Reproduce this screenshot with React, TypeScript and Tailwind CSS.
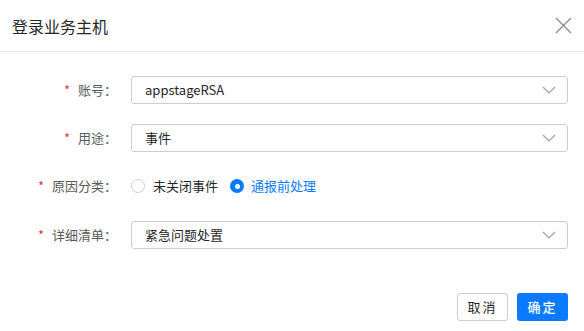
import React from 'react';

function Chevron() {
  return (
    <svg width="14" height="8" viewBox="0 0 14 8" fill="none" className="shrink-0">
      <path d="M1 1l6 6 6-6" stroke="#9aa0ac" strokeWidth="1.2" />
    </svg>
  );
}

function Label({ text }: { text: string }) {
  return (
    <div className="w-[131px] shrink-0 flex items-center justify-end pr-[14px] text-[13px] text-[#595959]">
      <span className="text-[#f5222d] mr-[8px] text-[12px]">*</span>
      <span>{text}：</span>
    </div>
  );
}

function Select({ value }: { value: string }) {
  return (
    <div className="flex-1 h-[28px] flex items-center justify-between pl-[13px] pr-[11px] border border-[#c9cdd8] rounded-[3px] text-[13px] text-[#262626]">
      <span>{value}</span>
      <Chevron />
    </div>
  );
}

export default function App() {
  const font = { fontFamily: '"Noto Sans CJK SC", "Liberation Sans", sans-serif' };
  return (
    <div className="w-[584px] h-[331px] bg-white flex flex-col" style={font}>
      <div className="h-[52px] flex items-center justify-between pl-[12px] pr-[12px] border-b border-[#e5e6eb]">
        <span className="text-[16px] text-[#262626]">登录业务主机</span>
        <svg width="17" height="17" viewBox="0 0 17 17" fill="none">
          <path d="M1 1l15 15M16 1L1 16" stroke="#8c8c8c" strokeWidth="1.4" />
        </svg>
      </div>
      <div className="flex flex-col pr-[16px] pt-[24px]">
        <div className="flex items-center">
          <Label text="账号" />
          <Select value="appstageRSA" />
        </div>
        <div className="flex items-center mt-[20px]">
          <Label text="用途" />
          <Select value="事件" />
        </div>
        <div className="flex items-center mt-[20px] h-[28px]">
          <Label text="原因分类" />
          <div className="flex items-center text-[13px]">
            <span className="w-[14px] h-[14px] rounded-full border border-[#c9cdd8]" />
            <span className="ml-[8px] text-[#262626]">未关闭事件</span>
            <span className="w-[14px] h-[14px] rounded-full bg-[#0a7bff] ml-[12px] flex items-center justify-center">
              <span className="w-[5px] h-[5px] rounded-full bg-white" />
            </span>
            <span className="ml-[7px] text-[#0a7bff]">通报前处理</span>
          </div>
        </div>
        <div className="flex items-center mt-[21px]">
          <Label text="详细清单" />
          <Select value="紧急问题处置" />
        </div>
      </div>
      <div className="flex justify-end gap-[9px] pr-[16px] mt-[44px]">
        <button className="w-[51px] h-[28px] border border-[#c9cdd8] rounded-[3px] text-[13px] text-[#262626] tracking-[2px] bg-white">
          取消
        </button>
        <button className="w-[51px] h-[28px] rounded-[3px] text-[13px] font-medium text-white tracking-[2px] bg-[#0a7bff]">
          确定
        </button>
      </div>
    </div>
  );
}
